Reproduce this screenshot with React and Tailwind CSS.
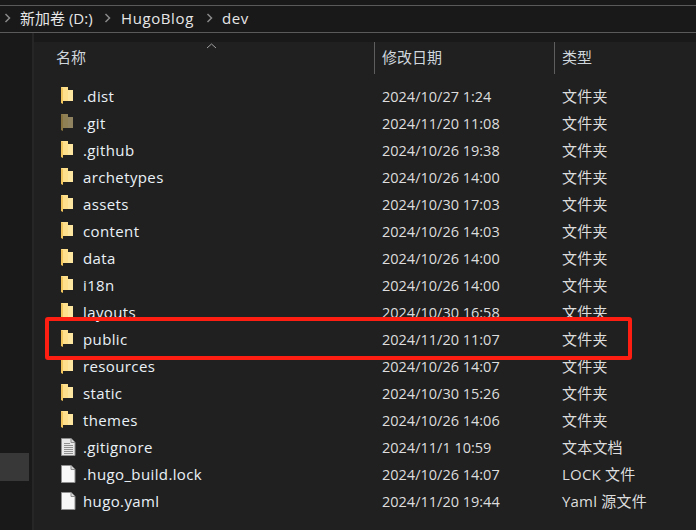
const FONT = "font-['Open_Sans','Noto_Sans_CJK_SC',sans-serif]";

const files = [
  { name: ".dist", date: "2024/10/27 1:24", type: "文件夹", icon: "folder" },
  { name: ".git", date: "2024/11/20 11:08", type: "文件夹", icon: "hidden" },
  { name: ".github", date: "2024/10/26 19:38", type: "文件夹", icon: "folder" },
  { name: "archetypes", date: "2024/10/26 14:00", type: "文件夹", icon: "folder" },
  { name: "assets", date: "2024/10/30 17:03", type: "文件夹", icon: "folder" },
  { name: "content", date: "2024/10/26 14:03", type: "文件夹", icon: "folder" },
  { name: "data", date: "2024/10/26 14:00", type: "文件夹", icon: "folder" },
  { name: "i18n", date: "2024/10/26 14:00", type: "文件夹", icon: "folder" },
  { name: "layouts", date: "2024/10/30 16:58", type: "文件夹", icon: "folder" },
  { name: "public", date: "2024/11/20 11:07", type: "文件夹", icon: "folder" },
  { name: "resources", date: "2024/10/26 14:07", type: "文件夹", icon: "folder" },
  { name: "static", date: "2024/10/30 15:26", type: "文件夹", icon: "folder" },
  { name: "themes", date: "2024/10/26 14:06", type: "文件夹", icon: "folder" },
  { name: ".gitignore", date: "2024/11/1 10:59", type: "文本文档", icon: "text" },
  { name: ".hugo_build.lock", date: "2024/10/26 14:07", type: "LOCK 文件", icon: "file" },
  { name: "hugo.yaml", date: "2024/11/20 19:44", type: "Yaml 源文件", icon: "file" },
];

const Folder = ({ dim }) => (
  <svg width="14" height="18" viewBox="0 0 14 18" className={dim ? "opacity-50" : ""}>
    <path d="M0 0H7V3H12V14H0Z" fill="#fde6a0" />
    <path d="M2 0H7V14H2Z" fill="#fddf8c" />
    <path d="M0 0L2 1V17L0 16Z" fill="#f2c65c" />
  </svg>
);

const FileIcon = ({ lines }) => (
  <svg width="15" height="18" viewBox="0 0 15 18">
    <path d="M0.5 0.5H10L14 4.5V17.5H0.5Z" fill={lines ? "#e8e8e8" : "#f7f7f7"} stroke="#8e8e8e" />
    <path d="M10 0.5V4.5H14" fill="#d8d8d8" stroke="#8e8e8e" />
    {lines && (
      <path d="M3 5.5H9M3 7.5H12M3 9.5H12M3 11.5H12M3 13.5H12M3 15.5H12" stroke="#8f8f8f" />
    )}
  </svg>
);

const RowIcon = ({ kind }) => {
  if (kind === "folder") return <Folder />;
  if (kind === "hidden") return <Folder dim />;
  return <FileIcon lines={kind === "text"} />;
};

const Crumb = ({ label, className }) => (
  <>
    <svg width="7" height="10" viewBox="0 0 7 10" className="shrink-0">
      <path d="M1.5 1L5.5 5L1.5 9" fill="none" stroke="#8a8a8a" strokeWidth="1.5" />
    </svg>
    <span className={className}>{label}</span>
  </>
);

export default function App() {
  return (
    <div className={`${FONT} relative h-[530px] w-[696px] overflow-hidden bg-[#191919] text-[15px] text-[#e6e6e6]`}>
      {/* address bar */}
      <div className="mt-[5px] flex h-[28px] items-center border-y border-[#5a5a5a] pb-[2px] pl-[4px]">
        <Crumb label="新加卷 (D:)" className="ml-[9px] w-[84px]" />
        <Crumb label="HugoBlog" className="ml-[10px] w-[85px] tracking-[0.6px]" />
        <Crumb label="dev" className="ml-[9px] tracking-[0.6px]" />
      </div>

      <div className="flex h-[497px]">
        {/* nav pane */}
        <div className="w-[34px] shrink-0 border-r-2 border-[#262626] pt-[420px]">
          <div className="h-[28px] w-[29px] bg-[#383838]" />
        </div>

        <div className="mt-[9px] min-w-0 flex-1 bg-[#202020]">
          {/* column headers */}
          <div className="relative flex h-[32px] text-[#cfd6dc]">
            <svg width="11" height="6" viewBox="0 0 11 6" className="absolute left-[172px] top-[1px]">
              <path d="M1 5L5.5 1L10 5" fill="none" stroke="#a0a0a0" />
            </svg>
            <div className="w-[340px] pl-[22px] pt-[4px]">名称</div>
            <div className="w-[180px] border-l border-[#5e5e5e] pl-[7px] pt-[4px]">修改日期</div>
            <div className="flex-1 border-l border-[#5e5e5e] pl-[7px] pt-[4px]">类型</div>
          </div>

          {/* file rows */}
          <div className="mt-[9px]">
            {files.map((file) => (
              <div key={file.name} className="flex h-[27px] items-center text-[#dddddd]">
                <div className="flex w-[49px] shrink-0 justify-end pl-[27px]">
                  <div className="mb-[1px] w-[22px]">
                    <RowIcon kind={file.icon} />
                  </div>
                </div>
                <div className="w-[299px] shrink-0 tracking-[0.38px] text-[#eaf1f7]">{file.name}</div>
                <div className="w-[180px] shrink-0 text-[14.5px]">{file.date}</div>
                <div className="tracking-[0.2px]">{file.type}</div>
              </div>
            ))}
          </div>
        </div>
      </div>

      {/* red highlight drawn over the screenshot */}
      <div className="absolute left-[45px] top-[317px] h-[43px] w-[587px] rounded-[3px] border-4 border-[#ff1e12]" />
    </div>
  );
}
